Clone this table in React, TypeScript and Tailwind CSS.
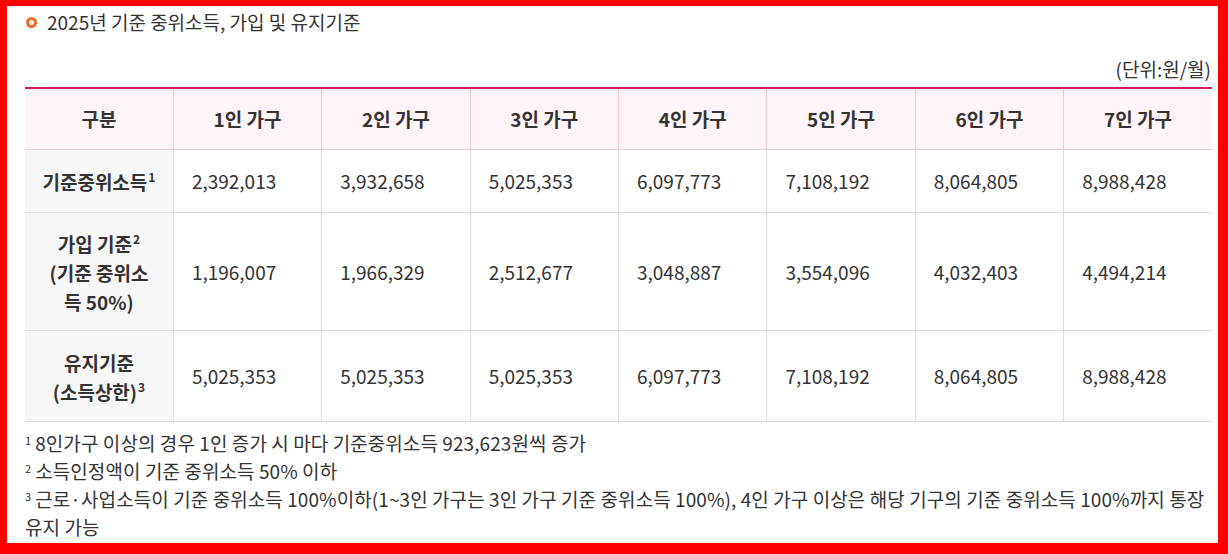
const headers = ["구분", "1인 가구", "2인 가구", "3인 가구", "4인 가구", "5인 가구", "6인 가구", "7인 가구"];

const Sup = ({ n }: { n: string }) => <sup className="text-[12px] ml-[1px] align-[2px]">{n}</sup>;

const rows = [
  {
    label: (
      <>
        기준중위소득
        <Sup n="1" />
      </>
    ),
    h: "h-[63px]",
    values: ["2,392,013", "3,932,658", "5,025,353", "6,097,773", "7,108,192", "8,064,805", "8,988,428"],
  },
  {
    label: (
      <>
        가입 기준
        <Sup n="2" />
        <br />
        (기준 중위소
        <br />득 50%)
      </>
    ),
    h: "h-[118px]",
    values: ["1,196,007", "1,966,329", "2,512,677", "3,048,887", "3,554,096", "4,032,403", "4,494,214"],
  },
  {
    label: (
      <>
        유지기준
        <br />
        (소득상한)
        <Sup n="3" />
      </>
    ),
    h: "h-[91px]",
    values: ["5,025,353", "5,025,353", "5,025,353", "6,097,773", "7,108,192", "8,064,805", "8,988,428"],
  },
];

const notes = [
  "8인가구 이상의 경우 1인 증가 시 마다 기준중위소득 923,623원씩 증가",
  "소득인정액이 기준 중위소득 50% 이하",
  "근로·사업소득이 기준 중위소득 100%이하(1~3인 가구는 3인 가구 기준 중위소득 100%), 4인 가구 이상은 해당 기구의 기준 중위소득 100%까지 통장",
];

const App = () => {
  return (
    <div
      className="h-[554px] w-[1228px] border-l-[7px] border-t-[6px] border-r-[10px] border-b-[11px] border-[#ff0000] bg-white pl-[18px] pr-[6px] text-[#333] text-[19px] overflow-hidden"
      style={{ fontFamily: '"Noto Sans CJK KR", "Noto Sans", sans-serif' }}
    >
      <div className="flex items-center gap-[10px] h-[32px]">
        <span className="w-[11px] h-[11px] rounded-full border-[3px] border-[#f26b21] ml-[1px]" />
        <h3>2025년 기준 중위소득, 가입 및 유지기준</h3>
      </div>

      <p className="mt-[19px] text-right leading-[24px] pr-[1px]">(단위:원/월)</p>

      <table className="mt-[6px] w-full table-fixed border-collapse border-t-2 border-[#d61f55]">
        <thead>
          <tr className="h-[61px] bg-[#fff4f7]">
            {headers.map((h, i) => (
              <th
                key={h}
                className={`font-bold text-center border-b border-[#f2c9d5] ${i > 0 ? "border-l" : ""}`}
              >
                {h}
              </th>
            ))}
          </tr>
        </thead>
        <tbody>
          {rows.map((r, ri) => (
            <tr key={ri} className={`${r.h} border-b border-[#dddddd]`}>
              <td className="bg-[#f7f7f7] font-bold text-center leading-[29px] pt-[2px]">{r.label}</td>
              {r.values.map((v, vi) => (
                <td key={vi} className="border-l border-[#dddddd] pl-[18px] pt-[2px]">
                  {v}
                </td>
              ))}
            </tr>
          ))}
        </tbody>
      </table>

      <div className="mt-[7px] leading-[28px] tracking-[0.08px]">
        {notes.map((t, i) => (
          <p key={i}>
            <sup className="text-[11px] mr-[4px]">{i + 1}</sup>
            {t}
            {i === 2 && (
              <>
                <br />
                유지 가능
              </>
            )}
          </p>
        ))}
      </div>
    </div>
  );
};

export default App;
